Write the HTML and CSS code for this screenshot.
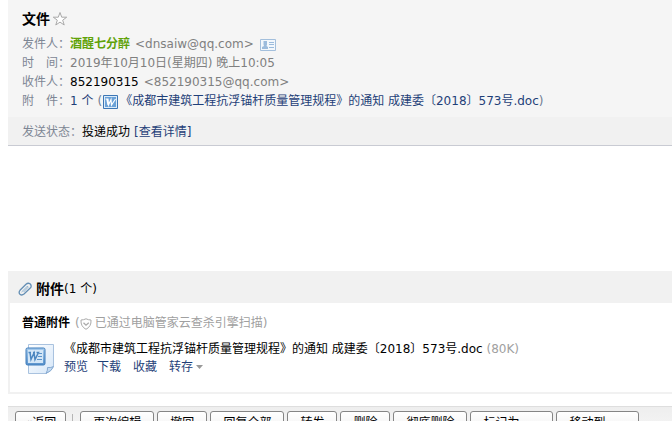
FILE: index.html
```html
<!DOCTYPE html>
<html lang="zh-CN">
<head>
<meta charset="utf-8">
<title>文件</title>
<link rel="stylesheet" href="styles.css">
</head>
<body>
<main class="mail">
  <header class="head">
    <div class="subject">
      <h1>文件</h1>
      <button class="star" type="button" aria-label="星标">
        <svg width="16" height="16" viewBox="0 0 16 16" fill="#fff" stroke="#a9a9a9"><path d="M8 1.5L9.7 6.2H14.7L10.7 9.2L12.2 14L8 11.1L3.8 14L5.3 9.2L1.3 6.2H6.3Z"/></svg>
      </button>
    </div>
    <div class="row"><span class="label">发件人：</span><b class="sender">酒醒七分醉</b><span class="addr">&lt;dnsaiw@qq.com&gt;</span>
      <svg class="card" width="16" height="12" viewBox="0 0 16 12"><path d="M.5 .5H15.5V11.5H.5Z" fill="#f2f7fc" stroke="#a3bfdc"/><path d="M3.5 2H7V5.5L6.5 7L8 8V10H2V8L4 7L3.5 5.5Z" fill="#9bbbdc"/><path d="M9 3.5H14M9 5.5H14M9 8.5H14" stroke="#9bbbdc"/></svg>
    </div>
    <div class="row"><span class="label">时　间：</span><span class="time">2019年10月10日(星期四) 晚上10:05</span></div>
    <div class="row"><span class="label">收件人：</span><span>852190315</span><span class="addr">&lt;852190315@qq.com&gt;</span></div>
    <div class="row"><span class="label">附　件：</span><a class="count" href="#attachments">1 个</a><span class="paren">(</span>
      <svg class="doc" width="15" height="14" viewBox="0 0 15 14"><path d="M.5 .5H14.5V13.5H.5Z" fill="#dcecf9" stroke="#3c76b5"/><path d="M2 2H13V12H2Z" fill="#6ba2d8"/><path d="M2.500 4H5L5.500 10L8 4.500L8.500 10L12.500 4M3.800 4L5 10" fill="none" stroke="#fff" stroke-width="1.2"/></svg>
      <a href="#attachments">《成都市建筑工程抗浮锚杆质量管理规程》的通知 成建委〔2018〕573号.doc</a><span class="paren">)</span></div>
  </header>
  <div class="status"><span class="label">发送状态：</span><span>投递成功</span><a class="detail" href="#detail">[查看详情]</a></div>
  <article class="content"></article>
  <section class="attach" id="attachments">
    <div class="attach-head">
      <svg width="14" height="14" viewBox="0 0 14 14" fill="none" stroke-linecap="round"><path d="M3.800 9.800L9 4.600Q10.200 4 10 5.300L5.800 9.800" stroke="#8fb2cf"/><path d="M12.800 5.500L6 12Q3.800 13.800 2 12.300Q.3 10.500 2 8.300L8 2.300Q10 .5 12 1.800Q13.800 3.500 12.800 5.500" stroke="#638eb4" stroke-width="1.3"/></svg>
      <h2>附件</h2><span>(1 个)</span>
    </div>
    <div class="attach-body">
      <div class="kind"><b>普通附件</b><span class="scan">(<svg width="12" height="12" viewBox="0 0 12 12" fill="none" stroke="#aaa"><path d="M6 .8Q8.5 2 11 2Q11.5 8.5 6 11.3Q.5 8.5 1 2Q3.5 2 6 .8Z"/><path d="M3.5 4.8L6 7.2L8.8 4.8" stroke-width="1.3"/></svg>已通过电脑管家云查杀引擎扫描)</span></div>
      <div class="file">
        <svg width="30" height="32" viewBox="0 0 30 32">
          <defs><linearGradient id="page" x2="1" y2="1"><stop stop-color="#fff"/><stop offset="1" stop-color="#d5e6f8"/></linearGradient><linearGradient id="tile" x2="0" y2="1"><stop stop-color="#a9cdee"/><stop offset="1" stop-color="#5992cc"/></linearGradient></defs>
          <path d="M3.500 1.500H28.500V23.500Q26 28 21 30.500H3.500Z" fill="url(#page)" stroke="#a9c2df"/><path d="M21 30.500Q23 27 22.500 24.500Q26 25 28.500 23.500Q27 28 21 30.500Z" fill="#c5daf0" stroke="#86aad2"/>
          <rect x="1" y="5" width="19" height="17" rx="1.500" fill="url(#tile)" stroke="#3f7dbb"/><path d="M3 7H18V20H3Z" fill="#d3e6f7"/>
          <path d="M3.500 9.500H6M5 9.500L6 16.500L9 10L10 16.500L13.500 9.500H11.500M8 9.500H10" fill="none" stroke="#4b86c0" stroke-width="1.500"/><path d="M14 10.500H17M13 13.500H17M12 16.500H17" stroke="#5c94ca"/>
        </svg>
        <div class="info">
          <div class="name">《成都市建筑工程抗浮锚杆质量管理规程》的通知 成建委〔2018〕573号.doc <span class="size">(80K)</span></div>
          <nav class="actions"><a class="preview" href="#preview">预览</a><a href="#download">下载</a><a href="#favorite">收藏</a><a class="save" href="#save">转存<svg width="7" height="4" viewBox="0 0 7 4"><path d="M0 0H7L3.500 4Z" fill="#999"/></svg></a></nav>
        </div>
      </div>
    </div>
  </section>
  <div class="toolbar">
    <button class="back" type="button">«返回</button>
    <span class="divider"></span>
    <button type="button">再次编辑</button>
    <button type="button">撤回</button>
    <button type="button">回复全部</button>
    <button type="button">转发</button>
    <button type="button">删除</button>
    <button type="button">彻底删除</button>
    <select aria-label="标记为"><option>标记为...</option></select>
    <select aria-label="移动到"><option>移动到...</option></select>
  </div>
</main>
</body>
</html>
```
FILE: styles.css
```css
html {
  overflow: hidden;
}

body {
  margin: 0;
  background: #fff;
  color: #000;
  font: 12px/19px "DejaVu Sans", "Noto Sans CJK SC", sans-serif;
  white-space: nowrap;
}

.mail {
  margin-left: 8px;
}

svg {
  flex: none;
}

a {
  color: #1f3f78;
  text-decoration: none;
}

h1,
h2 {
  margin: 0;
  font-size: 14px;
}

.head {
  padding: 9px 14px 6px;
  background: #f5f5f5;
}

.subject {
  display: flex;
  align-items: center;
  gap: 2px;
  height: 20px;
  margin-bottom: 6px;
}

.star {
  display: flex;
  padding: 0;
  border: 0;
  background: none;
}

.row,
.status {
  display: flex;
  align-items: center;
}

.row {
  height: 19px;
}

.label {
  color: #7d8694;
}

.sender {
  color: #5fa207;
}

.addr {
  margin-left: 5px;
  color: #808080;
}

.card {
  margin-left: 6px;
}

.time {
  color: #808080;
}

.paren {
  color: #6f7c94;
}

.count {
  margin-right: 4px;
}

.doc {
  margin: 0 2px 0 1px;
}

.status {
  height: 26px;
  padding: 2px 14px 0;
  border-bottom: 1px solid #c9cbd3;
  background: #f1f1f1;
}

.detail {
  margin-left: 4px;
}

.content {
  min-height: 125px;
}

.attach {
  border: solid #f1f1f1;
  border-width: 0 0 2px 2px;
}

.attach-head {
  display: flex;
  align-items: center;
  box-sizing: border-box;
  height: 32px;
  padding: 4px 0 0 8px;
  background: #f1f1f1;
}

.attach-head h2 {
  margin-left: 4px;
}

.attach-body {
  padding: 11px 12px 16px;
}

.kind,
.scan {
  display: flex;
  align-items: center;
}

.scan {
  margin-left: 5px;
  color: #a0a0a0;
}

.scan svg {
  margin-right: 3px;
}

.file {
  display: flex;
  gap: 9px;
  padding: 7px 3px 0;
}

.file > svg {
  margin-top: 3px;
}

.name,
.actions {
  height: 18px;
}

.size {
  color: #a0a0a0;
}

.actions {
  display: flex;
  gap: 12px;
}

.preview {
  margin-right: -3px;
}

.save {
  display: flex;
  align-items: center;
  gap: 3px;
}

.toolbar {
  display: flex;
  gap: 3px;
  margin-top: 12px;
  padding: 4px 7px;
  border-top: 1px solid #dedede;
  background: linear-gradient(#eee, #f7f7f7);
}

.toolbar button,
.toolbar select {
  flex: none;
  box-sizing: border-box;
  height: 24px;
  padding: 1px 12px 0;
  border: 1px solid #858585;
  border-radius: 3px;
  background: linear-gradient(#fff, #eee);
  color: #000;
  font: inherit;
}

.toolbar .back {
  padding: 1px 9px 0;
}

.toolbar select {
  appearance: none;
  padding-right: 21px;
}

.divider {
  width: 1px;
  height: 18px;
  margin: 3px 4px 0 3px;
  background: #b5b5b5;
}
```
